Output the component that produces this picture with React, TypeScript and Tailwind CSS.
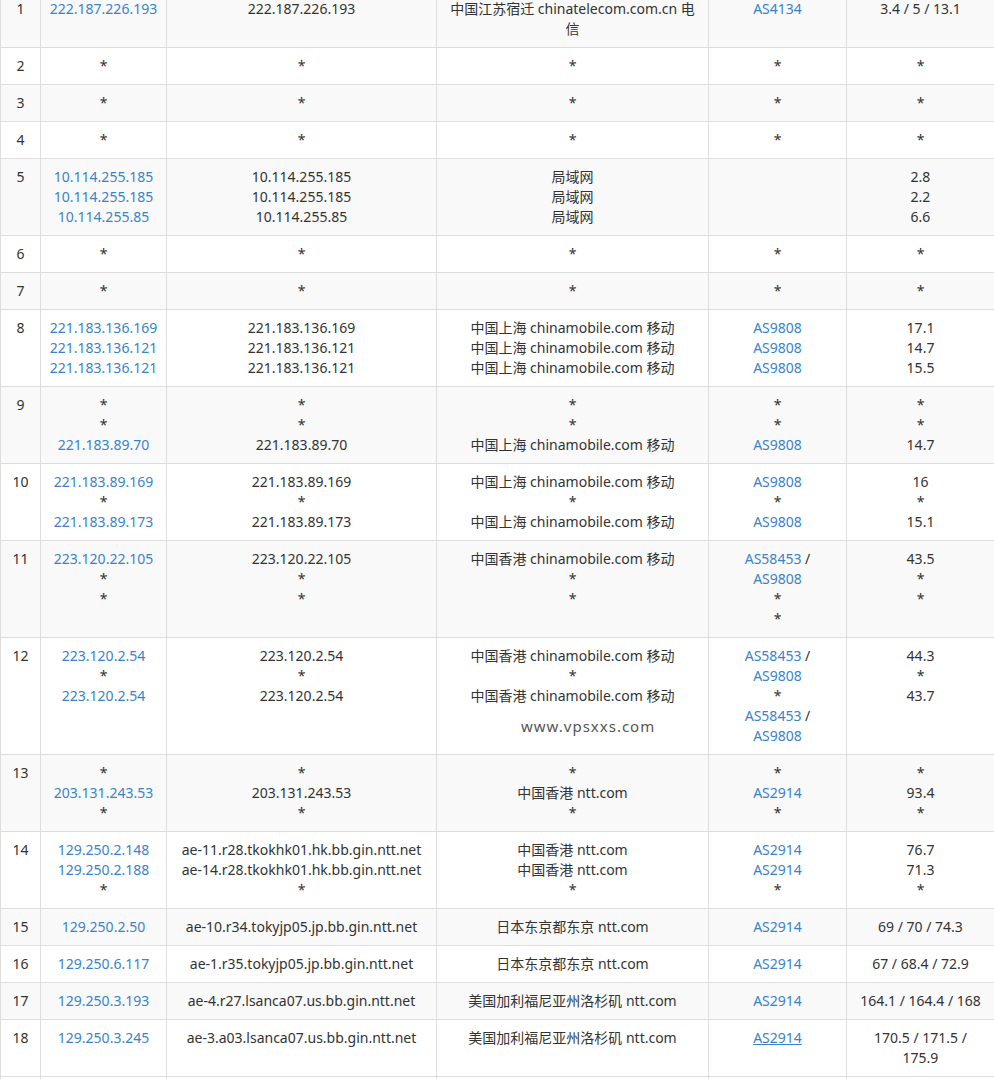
type Row = [number, string[], string[], string[], string[][], string[][]]

const CM = '中国上海 chinamobile.com 移动'
const HK = '中国香港 chinamobile.com 移动'

const rows: Row[] = [
  [1, ['222.187.226.193'], ['222.187.226.193'], ['中国江苏宿迁 chinatelecom.com.cn 电', '信'], [['AS4134']], [['3.4 / 5 / 13.1']]],
  [2, ['*'], ['*'], ['*'], [['*']], [['*']]],
  [3, ['*'], ['*'], ['*'], [['*']], [['*']]],
  [4, ['*'], ['*'], ['*'], [['*']], [['*']]],
  [5, ['10.114.255.185', '10.114.255.185', '10.114.255.85'], ['10.114.255.185', '10.114.255.185', '10.114.255.85'], ['局域网', '局域网', '局域网'], [], [['2.8'], ['2.2'], ['6.6']]],
  [6, ['*'], ['*'], ['*'], [['*']], [['*']]],
  [7, ['*'], ['*'], ['*'], [['*']], [['*']]],
  [8, ['221.183.136.169', '221.183.136.121', '221.183.136.121'], ['221.183.136.169', '221.183.136.121', '221.183.136.121'], [CM, CM, CM], [['AS9808'], ['AS9808'], ['AS9808']], [['17.1'], ['14.7'], ['15.5']]],
  [9, ['*', '*', '221.183.89.70'], ['*', '*', '221.183.89.70'], ['*', '*', CM], [['*'], ['*'], ['AS9808']], [['*'], ['*'], ['14.7']]],
  [10, ['221.183.89.169', '*', '221.183.89.173'], ['221.183.89.169', '*', '221.183.89.173'], [CM, '*', CM], [['AS9808'], ['*'], ['AS9808']], [['16'], ['*'], ['15.1']]],
  [11, ['223.120.22.105', '*', '*'], ['223.120.22.105', '*', '*'], [HK, '*', '*'], [['AS58453 /', 'AS9808'], ['*'], ['*']], [['43.5'], ['*'], ['*']]],
  [12, ['223.120.2.54', '*', '223.120.2.54'], ['223.120.2.54', '*', '223.120.2.54'], [HK, '*', HK], [['AS58453 /', 'AS9808'], ['*'], ['AS58453 /', 'AS9808']], [['44.3'], ['*'], ['43.7']]],
  [13, ['*', '203.131.243.53', '*'], ['*', '203.131.243.53', '*'], ['*', '中国香港 ntt.com', '*'], [['*'], ['AS2914'], ['*']], [['*'], ['93.4'], ['*']]],
  [14, ['129.250.2.148', '129.250.2.188', '*'], ['ae-11.r28.tkokhk01.hk.bb.gin.ntt.net', 'ae-14.r28.tkokhk01.hk.bb.gin.ntt.net', '*'], ['中国香港 ntt.com', '中国香港 ntt.com', '*'], [['AS2914'], ['AS2914'], ['*']], [['76.7'], ['71.3'], ['*']]],
  [15, ['129.250.2.50'], ['ae-10.r34.tokyjp05.jp.bb.gin.ntt.net'], ['日本东京都东京 ntt.com'], [['AS2914']], [['69 / 70 / 74.3']]],
  [16, ['129.250.6.117'], ['ae-1.r35.tokyjp05.jp.bb.gin.ntt.net'], ['日本东京都东京 ntt.com'], [['AS2914']], [['67 / 68.4 / 72.9']]],
  [17, ['129.250.3.193'], ['ae-4.r27.lsanca07.us.bb.gin.ntt.net'], ['美国加利福尼亚州洛杉矶 ntt.com'], [['AS2914']], [['164.1 / 164.4 / 168']]],
  [18, ['129.250.3.245'], ['ae-3.a03.lsanca07.us.bb.gin.ntt.net'], ['美国加利福尼亚州洛杉矶 ntt.com'], [['AS2914']], [['170.5 / 171.5 /', '175.9']]],
]

const link = 'text-[#3a83c9]'

const Lines = ({ items, isLink }: { items: string[]; isLink?: boolean }) => (
  <>
    {items.map((t, i) => (
      <div key={i} className={isLink && t !== '*' ? link : ''}>
        {t}
      </div>
    ))}
  </>
)

const AsCell = ({ groups, last }: { groups: string[][]; last?: boolean }) => (
  <>
    {groups.flatMap((g, gi) =>
      g.map((t, i) => (
        <div key={gi + '-' + i}>
          {t === '*' ? (
            '*'
          ) : t.endsWith(' /') ? (
            <>
              <span className={link}>{t.slice(0, -2)}</span> /
            </>
          ) : (
            <span className={link + (last ? ' underline' : '')}>{t}</span>
          )}
        </div>
      ))
    )}
  </>
)

export default function App() {
  const td = 'border border-[#dddddd] px-2 py-2 align-top text-center'
  return (
    <div className="w-[994px] h-[1079px] overflow-hidden bg-white">
      <table
        className="w-[994px] table-fixed border-collapse -mt-[10px] text-[14px] leading-5 text-[#333]"
        style={{ fontFamily: '"Noto Sans", "Noto Sans CJK SC", sans-serif' }}
      >
        <colgroup>
          <col className="w-[40px]" />
          <col className="w-[126px]" />
          <col className="w-[270px]" />
          <col className="w-[272px]" />
          <col className="w-[138px]" />
          <col className="w-[148px]" />
        </colgroup>
        <tbody>
          {rows.map(([n, ips, hosts, locs, asn, times], ri) => (
            <tr key={n} className={ri % 2 === 0 ? 'bg-[#f9f9f9]' : 'bg-white'}>
              <td className={td}>{n}</td>
              <td className={td}>
                <Lines items={ips} isLink />
              </td>
              <td className={td}>
                <Lines items={hosts} />
              </td>
              <td className={td + ' relative'}>
                <Lines items={locs} />
                {n === 12 && (
                  <div className="absolute left-[84px] top-[78px] text-[15px] tracking-[1px] text-[#555]">www.vpsxxs.com</div>
                )}
              </td>
              <td className={td}>
                <AsCell groups={asn} last={n === 18} />
              </td>
              <td className={td}>
                {times.map((g, i) => (
                  <Lines key={i} items={g} />
                ))}
              </td>
            </tr>
          ))}
          <tr className="bg-white">
            {[0, 1, 2, 3, 4, 5].map((i) => (
              <td key={i} className={td}>
                &nbsp;
              </td>
            ))}
          </tr>
        </tbody>
      </table>
    </div>
  )
}
